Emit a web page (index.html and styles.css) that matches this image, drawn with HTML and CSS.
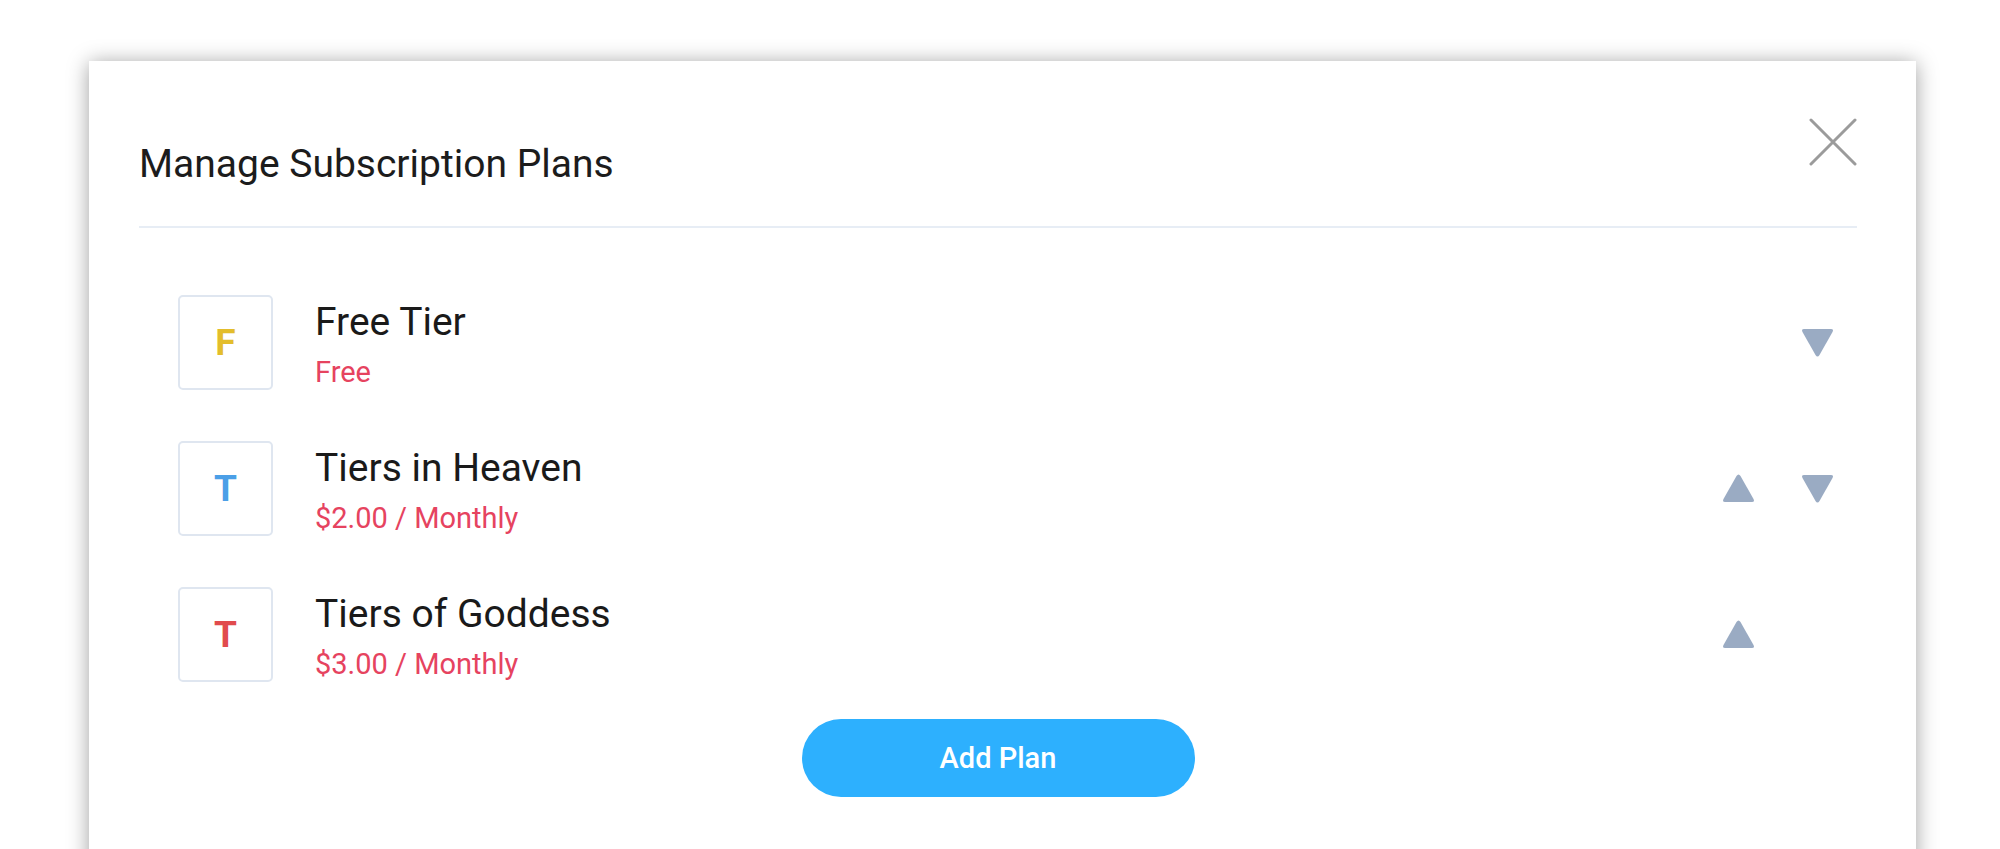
FILE: index.html
```html
<!DOCTYPE html>
<html>
<head>
<meta charset="utf-8">
<link rel="stylesheet" href="styles.css">
</head>
<body>
<div class="modal">
  <div class="header">
    <h1 class="title">Manage Subscription Plans</h1>
    <button class="close" aria-label="Close">
      <svg width="48" height="48" viewBox="0 0 48 48"><path d="M2 2 L46 46 M46 2 L2 46" stroke="#9b9b9b" stroke-width="3" stroke-linecap="round"/></svg>
    </button>
  </div>
  <div class="plans">
    <div class="plan">
      <div class="badge yellow">F</div>
      <div class="info">
        <div class="name">Free Tier</div>
        <div class="price">Free</div>
      </div>
      <div class="moves">
        <span class="slot"></span>
        <span class="slot"><svg width="33" height="31" viewBox="0 0 33 31"><path d="M3 2 H30 Q33 2 31.5 5 L18.5 28 Q16.5 31 14.5 28 L1.5 5 Q0 2 3 2 Z" fill="#9aabc3"/></svg></span>
      </div>
    </div>
    <div class="plan">
      <div class="badge blue">T</div>
      <div class="info">
        <div class="name">Tiers in Heaven</div>
        <div class="price">$2.00 / Monthly</div>
      </div>
      <div class="moves">
        <span class="slot"><svg width="33" height="31" viewBox="0 0 33 31"><path d="M3 29 H30 Q33 29 31.5 26 L18.5 3 Q16.5 0 14.5 3 L1.5 26 Q0 29 3 29 Z" fill="#9aabc3"/></svg></span>
        <span class="slot"><svg width="33" height="31" viewBox="0 0 33 31"><path d="M3 2 H30 Q33 2 31.5 5 L18.5 28 Q16.5 31 14.5 28 L1.5 5 Q0 2 3 2 Z" fill="#9aabc3"/></svg></span>
      </div>
    </div>
    <div class="plan">
      <div class="badge red">T</div>
      <div class="info">
        <div class="name">Tiers of Goddess</div>
        <div class="price">$3.00 / Monthly</div>
      </div>
      <div class="moves">
        <span class="slot"><svg width="33" height="31" viewBox="0 0 33 31"><path d="M3 29 H30 Q33 29 31.5 26 L18.5 3 Q16.5 0 14.5 3 L1.5 26 Q0 29 3 29 Z" fill="#9aabc3"/></svg></span>
        <span class="slot"></span>
      </div>
    </div>
  </div>
  <div class="actions">
    <button class="add">Add Plan</button>
  </div>
</div>
</body>
</html>
```
FILE: styles.css
```css
html, body {
  margin: 0;
  padding: 0;
  background: #ffffff;
  font-family: Roboto, "Liberation Sans", Arial, sans-serif;
  overflow: hidden;
}

.modal {
  margin: 61px 0 0 89px;
  width: 1827px;
  min-height: 900px;
  box-sizing: border-box;
  padding: 57px 59px 0 50px;
  background: #ffffff;
  box-shadow: 0 2px 20px rgba(0, 0, 0, 0.38);
}

.header {
  display: flex;
  justify-content: space-between;
  align-items: flex-start;
  border-bottom: 2px solid #e7edf5;
  padding-bottom: 39px;
}

.title {
  margin: 23px 0 0 0;
  font-size: 39px;
  line-height: 46px;
  font-weight: 400;
  color: #1c1c1c;
}

.close {
  border: 0;
  background: none;
  padding: 0;
  width: 48px;
  height: 48px;
  display: block;
}

.close svg { display: block; }

.plans {
  display: flex;
  flex-direction: column;
  gap: 51px;
  padding: 67px 23px 0 39px;
}

.plan {
  display: flex;
  align-items: flex-start;
}

.badge {
  width: 95px;
  height: 95px;
  box-sizing: border-box;
  border: 2px solid #dfe6f0;
  border-radius: 5px;
  display: flex;
  align-items: center;
  justify-content: center;
  font-size: 37px;
  font-weight: 700;
}

.yellow { color: #e3bd2c; }
.blue { color: #4b9fe7; }
.red { color: #e14b4d; }

.info {
  margin-left: 42px;
  padding-top: 4px;
  flex: 1;
}

.name {
  font-size: 39px;
  line-height: 46px;
  color: #1a1a1a;
}

.price {
  margin-top: 9px;
  font-size: 29px;
  line-height: 36px;
  color: #e6435f;
}

.moves {
  display: flex;
  gap: 46px;
  align-self: center;
}

.slot {
  width: 33px;
  height: 31px;
  display: block;
}

.slot svg { display: block; }

.actions {
  display: flex;
  justify-content: center;
  padding-top: 37px;
}

.add {
  width: 393px;
  height: 78px;
  border: 0;
  border-radius: 39px;
  background: #2db0fe;
  color: #ffffff;
  font-family: Roboto, "Liberation Sans", Arial, sans-serif;
  font-size: 29px;
  font-weight: 500;
}
```
